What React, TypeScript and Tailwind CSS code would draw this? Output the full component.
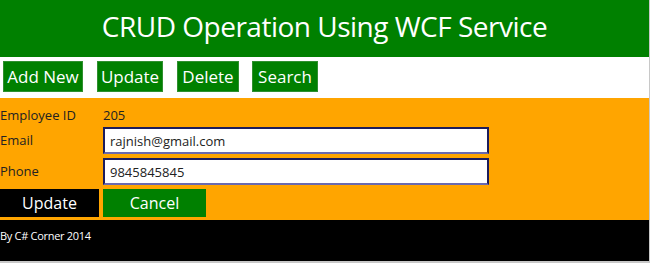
import React, { useState } from 'react';

const font = { fontFamily: '"Open Sans", "Noto Sans", sans-serif' };

const NavButton = ({ label, width }: { label: string; width: string }) => (
    <button className={`h-[31px] ${width} bg-[#008000] border border-[#2f8f2f] text-white text-[17px] leading-none`}>
        {label}
    </button>
);

const App = () => {
    const [email, setEmail] = useState('rajnish@gmail.com');
    const [phone, setPhone] = useState('9845845845');

    return (
        <div className="w-[650px] h-[263px] bg-[#c8c8c8] overflow-hidden" style={font}>
            <div className="w-[649px]">
                <header className="h-[57px] bg-[#008000] flex items-center justify-center pb-[6px]">
                    <h1 className="text-white text-[28px] leading-none tracking-[-0.5px]">CRUD Operation Using WCF Service</h1>
                </header>

                <nav className="h-[41px] bg-white pt-[4px] pl-[3px] flex items-start">
                    <NavButton label="Add New" width="w-[80px]" />
                    <div className="ml-[14px]"><NavButton label="Update" width="w-[66px]" /></div>
                    <div className="ml-[14px]"><NavButton label="Delete" width="w-[62px]" /></div>
                    <div className="ml-[13px]"><NavButton label="Search" width="w-[66px]" /></div>
                </nav>

                <section className="h-[122px] bg-[#ffa500] pt-[7px] flex flex-col text-[13px] text-[#222]">
                    <div className="h-[22px] flex items-center">
                        <span className="w-[103px]">Employee ID</span>
                        <span>205</span>
                    </div>
                    <div className="h-[27px] flex items-center">
                        <label className="w-[103px]">Email</label>
                        <input
                            className="w-[386px] h-[27px] bg-white border-2 border-t-[#1c1c5c] border-l-[#1c1c5c] border-r-[#1c1c5c] border-b-[#6a6ab0] px-[5px] text-[13px] text-[#222] outline-none"
                            value={email}
                            onChange={(e) => setEmail(e.target.value)}
                        />
                    </div>
                    <div className="h-[27px] mt-[4px] flex items-center">
                        <label className="w-[103px]">Phone</label>
                        <input
                            className="w-[386px] h-[27px] bg-white border-2 border-t-[#1c1c5c] border-l-[#1c1c5c] border-r-[#1c1c5c] border-b-[#6a6ab0] px-[5px] text-[13px] text-[#222] outline-none"
                            value={phone}
                            onChange={(e) => setPhone(e.target.value)}
                        />
                    </div>
                    <div className="mt-[4px] flex gap-[4px]">
                        <button className="w-[99px] h-[28px] bg-black text-white text-[16px] leading-none">Update</button>
                        <button className="w-[103px] h-[28px] bg-[#008000] text-white text-[16px] leading-none">Cancel</button>
                    </div>
                </section>

                <footer className="h-[41px] bg-black text-white text-[11px] pt-[8px] tracking-[-0.3px]">
                    By C# Corner 2014
                </footer>
            </div>
        </div>
    );
};

export default App;
